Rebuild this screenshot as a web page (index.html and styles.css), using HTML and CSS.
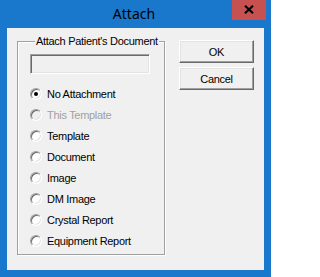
FILE: index.html
```html
<!DOCTYPE html>
<html>
<head>
<meta charset="utf-8">
<link rel="stylesheet" href="styles.css">
</head>
<body>
<div class="window">
  <div class="titlebar">
    <span></span>
    <span class="title">Attach</span>
    <span class="close"><svg width="10" height="9" viewBox="0 0 10 9"><path d="M1 0.8 L9 8.2 M9 0.8 L1 8.2" stroke="#000" stroke-width="2.2"/></svg></span>
  </div>
  <div class="client">
    <fieldset class="group">
      <legend class="legend">Attach Patient's Document</legend>
      <div class="textbox"></div>
      <ul class="radios">
        <li class="radio-row"><span class="radio checked"></span><span>No Attachment</span></li>
        <li class="radio-row disabled"><span class="radio"></span><span>This Template</span></li>
        <li class="radio-row"><span class="radio"></span><span>Template</span></li>
        <li class="radio-row"><span class="radio"></span><span>Document</span></li>
        <li class="radio-row"><span class="radio"></span><span>Image</span></li>
        <li class="radio-row"><span class="radio"></span><span>DM Image</span></li>
        <li class="radio-row"><span class="radio"></span><span>Crystal Report</span></li>
        <li class="radio-row"><span class="radio"></span><span>Equipment Report</span></li>
      </ul>
    </fieldset>
    <div class="buttons">
      <div class="btn">OK</div>
      <div class="btn">Cancel</div>
    </div>
  </div>
</div>
</body>
</html>
```

FILE: styles.css
```css
html, body {
  margin: 0;
  padding: 0;
}
.window {
  width: 271px;
  height: 277px;
  background: #1a78cc;
  display: flex;
  flex-direction: column;
  font-family: "Liberation Sans", Arial, sans-serif;
  font-size: 11px;
  letter-spacing: -0.3px;
  color: #000;
}
.titlebar {
  height: 28px;
  display: grid;
  grid-template-columns: 1fr auto 1fr;
  align-items: start;
}
.title {
  font-family: "Noto Sans", "Open Sans", sans-serif;
  font-size: 14px;
  letter-spacing: 0;
  line-height: 14px;
  padding-top: 7px;
  padding-right: 3px;
}
.close {
  justify-self: end;
  width: 34px;
  height: 20px;
  margin-right: 5px;
  background: #c75050;
  display: flex;
  align-items: center;
  justify-content: center;
}
.close svg {
  display: block;
  margin-top: -1px;
}
.client {
  flex: 1;
  margin: 0 7px 7px 7px;
  background: #f0f0f0;
  display: flex;
  align-items: flex-start;
  padding: 6px 0 0 10px;
}
.group {
  margin: 0;
  width: 148px;
  box-sizing: border-box;
  border: 1px solid #a0a0a0;
  box-shadow: 1px 1px 0 #fff, inset 1px 1px 0 #fff;
  padding: 6px 0 3px 12px;
}
.legend {
  margin-left: 5px;
  padding: 0 1px 0 1px;
  line-height: 14px;
  background: #f0f0f0;
}
.textbox {
  width: 120px;
  height: 20px;
  box-sizing: border-box;
  background: #f0f0f0;
  border: 1px solid;
  border-color: #a0a0a0 #fff #fff #a0a0a0;
  box-shadow: inset 1px 1px 0 #696969, inset -1px -1px 0 #e3e3e3;
}
.radios {
  list-style: none;
  margin: 9px 0 0 0;
  padding: 0;
}
.radio-row {
  height: 21px;
  display: flex;
  align-items: center;
  gap: 5px;
}
.radio-row.disabled {
  color: #a0a0a0;
}
.radio {
  width: 12px;
  height: 12px;
  box-sizing: border-box;
  border-radius: 50%;
  border: 1px solid;
  border-color: #a0a0a0 #fff #fff #a0a0a0;
  box-shadow: inset 1px 1px 0 #696969, inset -1px -1px 0 #e3e3e3;
  background: #fff;
  display: flex;
  align-items: center;
  justify-content: center;
}
.disabled .radio {
  background: #f0f0f0;
}
.radio.checked::after {
  content: "";
  width: 4px;
  height: 4px;
  border-radius: 50%;
  background: #000;
}
.buttons {
  display: flex;
  flex-direction: column;
  gap: 4px;
  margin: 6px 0 0 14px;
}
.btn {
  width: 75px;
  height: 23px;
  box-sizing: border-box;
  border: 1px solid;
  border-color: #fff #696969 #696969 #fff;
  box-shadow: inset -1px -1px 0 #a0a0a0, inset 1px 1px 0 #e3e3e3;
  background: #f0f0f0;
  display: flex;
  align-items: center;
  justify-content: center;
}
```
